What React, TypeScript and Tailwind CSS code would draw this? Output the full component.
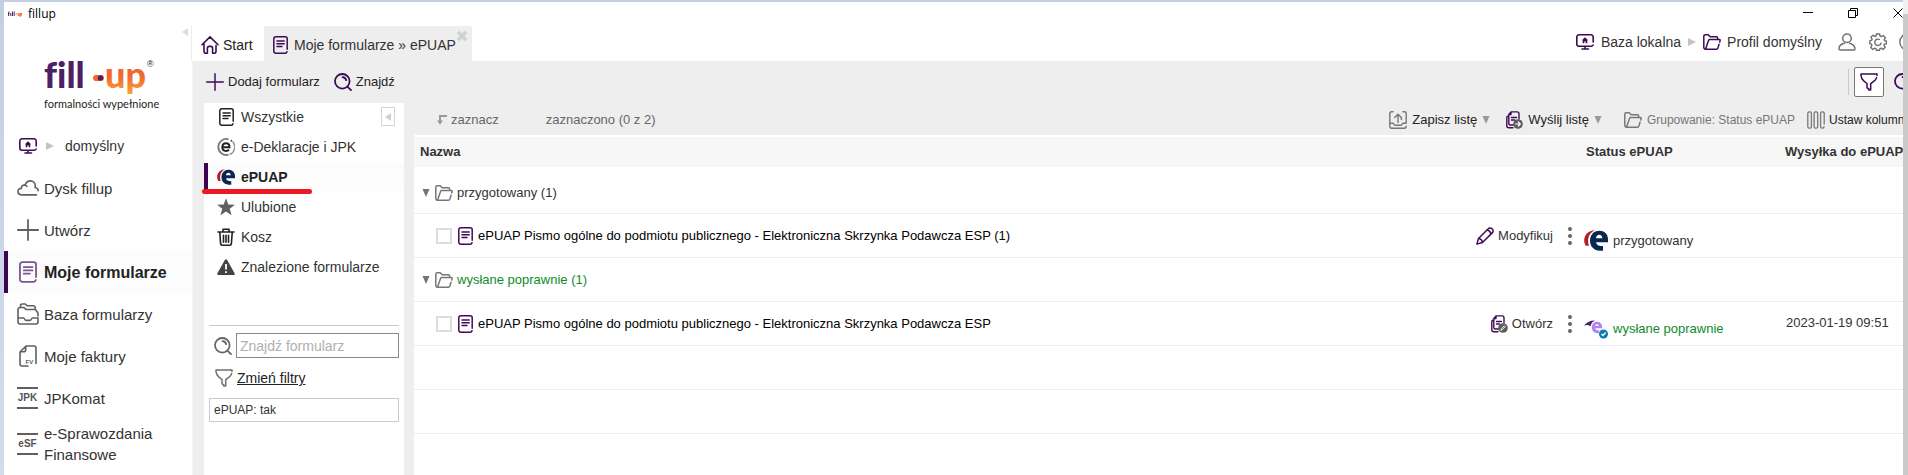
import React from "react";

type IconProps = { className?: string };

const stroke = {
  fill: "none",
  stroke: "currentColor",
  strokeLinecap: "round" as const,
  strokeLinejoin: "round" as const,
};

function Svg({
  box = "0 0 18 18",
  className = "",
  width = 1.4,
  children,
}: {
  box?: string;
  className?: string;
  width?: number;
  children: React.ReactNode;
}) {
  return (
    <svg viewBox={box} className={`shrink-0 ${className}`} {...stroke} strokeWidth={width} aria-hidden="true">
      {children}
    </svg>
  );
}

function DocIcon({ className = "h-[18px] w-[15px]" }: IconProps) {
  return (
    <Svg box="0 0 15 18" className={className} width={1.5}>
      <path d="M14.2 13.2V2.8a2 2 0 0 0-2-2H2.8a2 2 0 0 0-2 2v12.4a2 2 0 0 0 2 2H12a2 2 0 0 0 2-1.5M4 5h7.2M4 7.7h7.2M4 10.4h5" />
    </Svg>
  );
}

function MonitorIcon({ className = "" }: IconProps) {
  return (
    <Svg box="0 0 18 16" className={`h-4 w-[18px] ${className}`} width={1.6}>
      <path d="M17.2 8V3a2.2 2.2 0 0 0-2.2-2.2H3A2.2 2.2 0 0 0 .8 3v7A2.2 2.2 0 0 0 3 12.2h12A2.2 2.2 0 0 0 17.1 11M9 12.5v2.3M6 15h6.5" />
      <path d="M9 3.2 5.9 6.3h.8v3h1.6V7.5h1.4v1.8h1.6v-3h.8z" fill="currentColor" stroke="none" />
    </Svg>
  );
}

function FolderIcon({ className = "" }: IconProps) {
  return (
    <Svg box="0 0 18 16" className={`h-4 w-[18px] ${className}`} width={1.5}>
      <path d="M2 15.2C1.200 15 .8 14.500 .8 13.600V2.200Q.8.8 2.200.8h3l2 2h6q1.500 0 1.500 1.600v.8M2.500 15.200 5.600 6.300q.3-.9 1.200-.9h9.400q1.200 0 .9 1.200l-.4 1.400M16 10.300l-1.100 3.700q-.4 1.200-1.500 1.200H2.300" />
    </Svg>
  );
}

function CloudIcon() {
  return (
    <Svg box="0 0 22 16" className="h-4 w-[22px]" width={1.6}>
      <path d="M19.500 14.900H4.200A3.300 3.300 0 0 1 1 11.600c0-2 1.500-3.300 3.400-3.200C4.300 6 6 4.700 8 5.200 9 2.300 11 .9 13.300.9c3 0 5 2.200 5 5.100 0 .6 0 .9-.2 1.500 1.600.2 2.900 1.300 3.100 3.100M8 5.200c.8.200 1.400.6 1.800 1.100" />
    </Svg>
  );
}

function PlusIcon({ className = "" }: IconProps) {
  return (
    <Svg box="0 0 20 20" className={className} width={1.6}>
      <path d="M10 .8v18.400M.8 10h18.400" />
    </Svg>
  );
}

function InboxIcon() {
  return (
    <Svg box="0 0 22 22" className="size-[22px]" width={1.6}>
      <path d="M1 15V6.500a2 2 0 0 1 2-2h4l2 2h8.500q2 0 2 2M3.500 4.300V2.600q0-1.600 1.600-1.600h3.200l2 1.800h6q1.800 0 1.800 1.800v1.600M19.600 8.600q1.400.5 1.400 2V13M1 15h5.500q.8 0 1 .9.400 1.500 1.600 1.500h3.800q1.200 0 1.600-1.500.2-.9 1-.9H21v4a2 2 0 0 1-2 2H3a2 2 0 0 1-2-2z" />
    </Svg>
  );
}

function InvoiceIcon() {
  return (
    <svg viewBox="0 0 18 22" className="h-[22px] w-[18px] shrink-0" {...stroke} strokeWidth={1.6} aria-hidden="true">
      <path d="M9 21H3a2 2 0 0 1-2-2V7l6-6h8a2 2 0 0 1 2 2v15.500M1.200 6.800h3.500a2 2 0 0 0 2-2V1.500" />
      <text x="6.500" y="18.500" fontSize="6" fontWeight="700" fill="currentColor" stroke="none" fontFamily="Liberation Sans, sans-serif">
        FV
      </text>
    </svg>
  );
}

function LabelIcon({ text }: { text: string }) {
  return (
    <span className="flex h-[22px] w-[21px] items-center justify-center border-y-2 border-[#606060] text-[10px] leading-none font-bold text-[#555]">
      {text}
    </span>
  );
}

function HomeIcon() {
  return (
    <Svg className="size-[18px]" width={1.6}>
      <path d="M1 8.700 9 .9l8 7.800M3 7.500v7.700q0 2 2 2h1.400v-5q0-1.800 1.800-1.800h1.600q1.800 0 1.800 1.800v5H13q2 0 2-2V9.500" />
    </Svg>
  );
}

function SearchIcon({ className = "size-[18px]" }: IconProps) {
  return (
    <Svg className={className} width={1.800}>
      <circle cx="8.300" cy="8.300" r="7.300" />
      <path d="m13.600 13.800 3.400 3.300M8.500 4.200q3 .2 3.700 3" />
    </Svg>
  );
}

function FunnelIcon({ className = "" }: IconProps) {
  return (
    <Svg className={`size-[18px] ${className}`} width={1.500}>
      <path d="M17 2.500V1H1v1.500Q1.200 6 4 8.200l3 2.300v4.300q1 1 1.700.7v1.600h2v-6.500l3.300-2.400Q16 6.700 16.600 4.600" />
    </Svg>
  );
}

function UserIcon() {
  return (
    <Svg className="size-[18px]" width={1.500}>
      <circle cx="9" cy="5.200" r="4.300" />
      <path d="M17 15Q15.500 11 11.500 10.200M6.500 10.200Q1 11.300.9 15.800q0 1.300 1.300 1.300h13q1.600 0 1.800-1" />
    </Svg>
  );
}

function GearIcon() {
  return (
    <Svg className="size-[18px]" width={1.400}>
      <path d="M7.400 1h3.200l.5 2.200 1.100.5 2-1.200 2.200 2.200-1.200 2 .5 1.100L17.500 8v2.800l-2 .3-.5 1.200 1.200 2-2.100 2.200-2-1.300-1.200.5-.4 1.600H7.400L7 15.700l-1.200-.5-2 1.300-2.100-2.200 1.200-2-.5-1.200L.8 10.700V7.800l1.800-.5.500-1.100-1.300-2L4 2.200l1.900 1.300L7 3z" />
      <path d="M12 10.200A3.200 3.200 0 1 1 10.500 6.500" />
    </Svg>
  );
}

function EpuapIcon({ className = "h-[21px] w-6" }: IconProps) {
  return (
    <svg viewBox="0 0 24 21" className={`shrink-0 ${className}`} aria-hidden="true">
      <path fill="#b31b25" d="M11 .2C4 .2.100 5.500.200 10.500c0 2.300.8 4 1.600 5.300H5c-.9-2.300-1-4.800-.8-6.800C4.700 5 7 1.800 11 .2z" />
      <path
        fill="#08284f"
        fillRule="evenodd"
        d="M15.200.7C20.300.7 24 4.200 24 9v3.200H12c.4 2.700 2.700 3.900 7 3.900v4.600h-3C10 20.700 6 16.500 6 10.800 6 4.800 10 .7 15.200.7zM12 8.200h6.300c0-2.200-1.200-3.500-3.100-3.500-1.800 0-3 1.300-3.200 3.500z"
      />
    </svg>
  );
}

function SentIcon() {
  return (
    <svg viewBox="0 -2 24 21" className="h-[21px] w-6 shrink-0" aria-hidden="true">
      <path fill="#4a2168" d="M0 5.500Q5 .2 11 .6 7.500 2 6.500 6.200 3.500 4.200 0 5.500z" />
      <path
        fill="#b184f7"
        fillRule="evenodd"
        d="M12.800 1.800c3 0 5.400 2 5.400 5v1.400h-7c.2 1.700 1.600 2.200 4 2.200v2.800h-1.700c-3.300 0-5.700-2.300-5.700-5.700 0-3.300 2.200-5.700 5-5.700zM11.200 5.900h3.500c0-1.100-.7-1.700-1.700-1.700s-1.700.6-1.800 1.700z"
      />
      <circle cx="19.500" cy="14" r="4.500" fill="#0c78b8" />
      <path d="m17.500 14 1.500 1.500 2.600-3" fill="none" stroke="#fff" strokeWidth="1.300" />
    </svg>
  );
}

function DeclarationIcon() {
  return (
    <svg viewBox="0 0 18 18" className="size-[18px]" fill="none" aria-hidden="true">
      <path d="M11.500 1.300A8 8 0 1 0 11.500 16.700" stroke="#777" strokeWidth="1.800" />
      <path d="M12.500 16.500A8 8 0 0 0 15.500 3.500" stroke="#999" strokeWidth="1.600" />
      <path d="M5.500 9.200h7Q12.500 5.200 9 5.200T5.300 9.200q0 3.600 3.700 3.700 2 0 3-1.200" stroke="#222" strokeWidth="2" />
      <circle cx="14.300" cy="2.800" r="1" fill="#555" />
    </svg>
  );
}

function StarIcon() {
  return (
    <svg viewBox="0 0 18 18" className="size-[18px]" fill="#5f5f5f" aria-hidden="true">
      <path d="m9 .3 2.300 6.200 6.600.2-5.200 4 1.900 6.500L9 13.500l-5.600 3.700 1.900-6.500-5.200-4 6.600-.2z" />
    </svg>
  );
}

function TrashIcon() {
  return (
    <Svg className="size-[18px] text-[#222]" width={1.600}>
      <path d="M1 4h16M6 3.800V1.200h6v2.600M2.800 4.500l.8 11.200q.2 1.500 1.600 1.500h7.600q1.400 0 1.600-1.500l.8-11M6.500 7.200v7M9 7.200v7M11.500 7.200v7" />
    </Svg>
  );
}

function WarningIcon() {
  return (
    <svg viewBox="0 0 18 18" className="size-[18px]" aria-hidden="true">
      <path d="M9 1.200q.8 0 1.300 1l7.300 13q.7 1.800-1 1.800H1.400q-1.700 0-1-1.800l7.300-13q.500-1 1.300-1z" fill="#444" />
      <path d="M9 6v5.500M9 13.300v1.700" stroke="#fff" strokeWidth="1.800" />
    </svg>
  );
}

function PencilIcon() {
  return (
    <Svg className="size-[18px] text-[#3d0b55]" width={1.500}>
      <path d="M.9 17.100 2.500 11.500 12 2q1.500-1.600 3.200-.8 2.800 1.700 1.500 4.200L6.500 15.500zM2.500 11.500q3.300.3 4 4M11 3q3.300.6 3.900 4" />
    </Svg>
  );
}

function PagesIcon({ badge }: { badge: "arrow" | "pencil" }) {
  return (
    <Svg box="0 0 17 18" className="h-[18px] w-[17px] text-[#3d0b55]" width={1.400}>
      <path d="M5 .9h6q2 0 2 2V8M5 .9 2.800 3.500M2.800 3.500H5V1M2.800 4v8.500q0 1.500 1.500 1.500H8M2.500 5Q.8 5 .8 6.800v8q0 2 2 2H7M5.500 6.500h5M5.500 9h3" />
      <circle cx="12" cy="13" r="4.800" fill="#5c5c5c" stroke="none" />
      {badge === "arrow" ? (
        <path d="M9.500 13h4.600M12.300 11l2 2-2 2" stroke="#fff" strokeWidth="1.200" />
      ) : (
        <path d="m10 15 .4-1.300 3-3 .9.900-3 3z" stroke="#fff" strokeWidth=".9" />
      )}
    </Svg>
  );
}

function SaveIcon() {
  return (
    <Svg className="size-[18px] text-[#777]" width={1.400}>
      <path d="M4 .8H2.500Q.8.8.8 2.500v12.800q0 1.900 1.900 1.900h12.600q1.900 0 1.900-1.900M14 .8h1.500q1.700 0 1.700 1.700v9.800h-3.500q-.7 2-1.700 2H6q-1 0-1.700-2H1M9 11.500V4M5.600 6.500 9 3.200l3.400 3.300v2" />
    </Svg>
  );
}

function ColumnsIcon() {
  return (
    <Svg className="size-[18px] text-[#777]" width={1.300}>
      <rect x=".8" y=".8" width="3.600" height="16.400" rx="1.500" />
      <rect x="7.100" y=".8" width="3.600" height="16.400" rx="1.500" />
      <path d="M17.200 13V2.300q0-1.500-1.500-1.500h-.6q-1.500 0-1.500 1.500v13.400q0 1.500 1.500 1.500 1.600 0 1.900-1.200" />
    </Svg>
  );
}

function Triangle({ dir, className = "" }: { dir: "left" | "right" | "down"; className?: string }) {
  const points = dir === "left" ? "7,0 7,8 1,4" : dir === "right" ? "0,0 8,4 0,8" : "0.5,0 7.5,0 4,8";
  return (
    <svg viewBox="0 0 8 8" className={`size-2 shrink-0 fill-current ${className}`} aria-hidden="true">
      <polygon points={points} />
    </svg>
  );
}

function BrandMark() {
  return (
    <svg viewBox="0 -10 120 64" className="h-16 w-[120px]" role="img" aria-label="fill-up">
      <defs>
        <linearGradient id="warm" x1="0" y1="0" x2="0" y2="1">
          <stop offset="0.55" stopColor="#f1672f" />
          <stop offset="1" stopColor="#ffab35" />
        </linearGradient>
      </defs>
      <g fontFamily="Lato, sans-serif" fontWeight="900" fontSize="36" className="[font-variant-ligatures:none]">
        <text x="0" y="29" fill="#4d2065">
          fill
        </text>
        <text x="61" y="29" fill="url(#warm)">
          up
        </text>
      </g>
      <rect x="49" y="16" width="11" height="6" rx="3" fill="#f1672f" />
      <circle cx="56.500" cy="19" r="2.700" fill="#4d2065" />
      <text x="103" y="8" fontSize="9" fill="#222" fontFamily="Liberation Sans, sans-serif">
        ®
      </text>
      <text x="0" y="49" fontSize="11" fill="#1d1d1d" fontFamily="Lato, sans-serif">
        formalności wypełnione
      </text>
    </svg>
  );
}

const navItems = [
  { label: "Dysk fillup", icon: <CloudIcon /> },
  { label: "Utwórz", icon: <PlusIcon className="size-[22px]" /> },
  { label: "Moje formularze", icon: <DocIcon className="h-[22px] w-[18px] text-[#7b5592]" />, active: true },
  { label: "Baza formularzy", icon: <InboxIcon /> },
  { label: "Moje faktury", icon: <InvoiceIcon /> },
  { label: "JPKomat", icon: <LabelIcon text="JPK" /> },
  { label: "e-Sprawozdania Finansowe", icon: <LabelIcon text="eSF" /> },
];

const folders = [
  { label: "Wszystkie", icon: <DocIcon className="h-[18px] w-[15px] text-[#222]" /> },
  { label: "e-Deklaracje i JPK", icon: <DeclarationIcon /> },
  { label: "ePUAP", icon: <EpuapIcon className="h-4 w-[18px]" />, active: true },
  { label: "Ulubione", icon: <StarIcon /> },
  { label: "Kosz", icon: <TrashIcon /> },
  { label: "Znalezione formularze", icon: <WarningIcon /> },
];

function Sidebar() {
  return (
    <aside className="w-[188px] shrink-0">
      <div className="flex h-9 justify-end border-r border-[#eee] pt-[3px] pr-0.5">
        <button aria-label="Zwiń menu" className="h-2 text-[#ddd]">
          <Triangle dir="left" />
        </button>
      </div>
      <div className="-mt-3 h-16 pl-10">
        <BrandMark />
      </div>
      <button className="mt-3 flex h-[42px] items-center pl-[15px] text-sm text-[#333]">
        <MonitorIcon className="text-[#3d0b55]" />
        <Triangle dir="right" className="mr-[11px] ml-[9px] text-[#c4c4c4]" />
        domyślny
      </button>
      <nav>
        {navItems.map((item) => (
          <a
            key={item.label}
            href="#"
            className={`flex min-h-[42px] items-center gap-1.5 border-l-4 pt-1 leading-[21px] last:mt-1 last:pt-0 ${
              item.active
                ? "border-[#3b0552] bg-[#fcfcfc] pb-1 text-[16px] font-bold text-[#222]"
                : "border-transparent pb-1 text-[15px] text-[#333]"
            }`}
          >
            <span className="ml-2 flex w-[23px] shrink-0 justify-center text-[#606060]">{item.icon}</span>
            <span className="-ml-px">{item.label}</span>
          </a>
        ))}
      </nav>
    </aside>
  );
}

function TopBar() {
  return (
    <div className="flex h-9 items-stretch justify-between pt-px text-sm text-[#333]">
      <div className="flex">
        <button className="flex w-[72px] items-center gap-1 pt-0.5 pl-[9px] text-[#222]">
          <span className="text-[#3d0b55]">
            <HomeIcon />
          </span>
          Start
        </button>
        <div className="relative flex w-[208px] items-center bg-[#eee] pt-0.5">
          <button className="flex items-center gap-1.5 pl-[9px] whitespace-nowrap">
            <DocIcon className="h-[18px] w-[15px] text-[#3d0b55]" />
            Moje formularze » ePUAP
          </button>
          <button aria-label="Zamknij kartę" className="absolute top-1 right-1 text-[#d2d2d2]">
            <Svg box="0 0 12 12" className="size-3" width={3.600}>
              <path d="m3 3 6 6M9 3 3 9" />
            </Svg>
          </button>
        </div>
      </div>
      <div className="flex items-center pb-1 text-[#707070]">
        <button className="flex items-center gap-[7px] text-[#333]">
          <MonitorIcon className="text-[#3d0b55]" />
          Baza lokalna
        </button>
        <Triangle dir="right" className="mx-[7px] text-[#c4c4c4]" />
        <button className="mr-4 flex items-center gap-1.5 text-[#333]">
          <FolderIcon className="text-[#3d0b55]" />
          Profil domyślny
        </button>
        <button aria-label="Konto" className="mr-[13px]">
          <UserIcon />
        </button>
        <button aria-label="Ustawienia" className="mr-3">
          <GearIcon />
        </button>
        <button aria-label="Pomoc" className="flex w-1 overflow-hidden">
          <Svg className="size-[18px]">
            <circle cx="9" cy="9" r="8.200" />
          </Svg>
        </button>
      </div>
    </div>
  );
}

function Toolbar() {
  return (
    <div className="flex h-[42px] items-center justify-between pl-[13px] text-[13px] text-[#222]">
      <div className="flex items-center gap-3.5">
        <button className="flex items-center gap-1">
          <PlusIcon className="size-[18px] text-[#3d0b55]" />
          Dodaj formularz
        </button>
        <button className="flex items-center gap-1">
          <SearchIcon className="size-[18px] text-[#3d0b55]" />
          Znajdź
        </button>
      </div>
      <div className="flex items-center">
        <span className="mr-[5px] h-[26px] w-px bg-[#c3cccc]" />
        <button aria-label="Filtruj" className="flex size-[30px] items-center justify-center rounded-xs border border-[#777] bg-white text-[#3d0b55]">
          <FunnelIcon />
        </button>
        <button aria-label="Szukaj" className="ml-2.5 flex w-[9px] overflow-hidden text-[#3d0b55]">
          <SearchIcon />
        </button>
      </div>
    </div>
  );
}

function FolderPanel() {
  return (
    <section className="w-[200px] shrink-0 bg-white">
      <div className="relative">
        <button aria-label="Zwiń panel" className="absolute top-1 right-[9px] flex h-[19px] w-3.5 items-center justify-center border border-[#d5d5d5] text-[#d0d0d0]">
          <Triangle dir="left" />
        </button>
        <ul className="text-sm text-[#333]">
          {folders.map((f) => (
            <li key={f.label} className="relative h-[30px] pb-0.5">
              <a
                href="#"
                className={`flex h-7 items-center border-l-4 pl-[9px] ${
                  f.active ? "border-[#3b0552] bg-[#fcfcfc] font-bold text-[#222]" : "border-transparent"
                }`}
              >
                <span className="mr-1.5 flex w-[18px] justify-center">{f.icon}</span>
                {f.label}
              </a>
              {f.active && <span className="absolute -bottom-px -left-0.5 h-[5px] w-[110px] rounded-full bg-[#ec1822]" />}
            </li>
          ))}
        </ul>
      </div>
      <div className="mx-[5px] mt-[42px] border-t border-[#c3cccc] pt-[7px]">
        <label className="flex items-center gap-1 pl-[5px] text-[#666]">
          <SearchIcon />
          <input
            aria-label="Znajdź formularz"
            placeholder="Znajdź formularz"
            className="h-[25px] min-w-0 flex-1 border border-[#888] px-[3px] text-sm text-[#333] outline-none placeholder:text-[#b0b0b0]"
          />
        </label>
        <a href="#" className="mt-2.5 flex items-center gap-1 pl-[6px] text-sm text-[#222] underline">
          <FunnelIcon className="text-[#707070]" />
          Zmień filtry
        </a>
        <div className="mt-2.5 flex h-6 items-center border border-[#ccc] px-1 text-xs text-[#333]">ePUAP: tak</div>
      </div>
    </section>
  );
}

function ListToolbar() {
  return (
    <div className="flex h-8 items-center justify-between pt-0.5 text-[13px] text-[#666]">
      <div className="flex items-center gap-[47px] pl-[23px]">
        <button className="flex items-center gap-1">
          <svg viewBox="0 0 10 10" className="size-2.5" fill="none" stroke="#999" strokeWidth="2" aria-hidden="true">
            <path d="M10 1H3v5" />
            <path d="M0 5.500h6L3 9.800z" fill="#999" stroke="none" />
          </svg>
          zaznacz
        </button>
        <span>zaznaczono (0 z 2)</span>
      </div>
      <div className="flex items-center whitespace-nowrap text-[#222]">
        <button className="flex items-center gap-[5px]">
          <SaveIcon />
          Zapisz listę
          <Triangle dir="down" className="text-[#999]" />
        </button>
        <button className="ml-4 flex items-center gap-[5px]">
          <PagesIcon badge="arrow" />
          Wyślij listę
          <Triangle dir="down" className="text-[#999]" />
        </button>
        <button className="ml-[22px] flex items-center gap-[5px] text-xs text-[#777]">
          <FolderIcon />
          Grupowanie: Status ePUAP
        </button>
        <button className="ml-3 flex w-24 items-center gap-1 overflow-hidden text-xs">
          <ColumnsIcon />
          Ustaw kolumny
        </button>
      </div>
    </div>
  );
}

function GroupRow({ label, tone, cell }: { label: string; tone: string; cell: string }) {
  return (
    <tr className="border-b border-[#eee]">
      <td colSpan={4} className={cell}>
        <button className={`flex items-center pl-2 ${tone}`}>
          <Triangle dir="down" className="mr-[5px] text-[#6d7773]" />
          <FolderIcon className="mr-1 text-[#777]" />
          {label}
        </button>
      </td>
    </tr>
  );
}

function FormRow({
  title,
  action,
  icon,
  status,
  date,
}: {
  title: string;
  action: string;
  icon: React.ReactNode;
  status: React.ReactNode;
  date?: string;
}) {
  return (
    <tr className="h-11 border-b border-[#eee]">
      <td className="pt-0.5">
        <label className="flex items-center pl-[22px] text-black">
          <input type="checkbox" className="mr-1.5 size-4 appearance-none border-2 border-[#ddd] bg-white" />
          <DocIcon className="mr-[5px] h-[18px] w-[15px] text-[#3d0b55]" />
          {title}
        </label>
      </td>
      <td className="pt-0.5">
        <div className="flex items-center justify-end">
          <button className="flex items-center gap-1">
            {icon}
            {action}
          </button>
          <button aria-label="Więcej" className="mr-3 ml-[15px]">
            <svg viewBox="0 0 4 18" className="h-[18px] w-1 fill-[#666]" aria-hidden="true">
              <circle cx="2" cy="2" r="2" />
              <circle cx="2" cy="9" r="2" />
              <circle cx="2" cy="16" r="2" />
            </svg>
          </button>
        </div>
      </td>
      <td className="pt-0.5">{status}</td>
      <td className="pl-px">{date}</td>
    </tr>
  );
}

function FormsTable() {
  return (
    <table className="w-full table-fixed border-collapse border-t-2 border-white bg-white text-left text-[13px] text-[#333]">
      <colgroup>
        <col />
        <col className="w-40" />
        <col className="w-[201px]" />
        <col className="w-[118px]" />
      </colgroup>
      <thead>
        <tr className="h-[31px] bg-[#f7f7f7]">
          <th scope="col" className="pb-px pl-1.5 font-bold">
            Nazwa
          </th>
          <th aria-label="Akcje" />
          <th scope="col" className="pb-px pl-0.5 font-bold">
            Status ePUAP
          </th>
          <th scope="col" className="overflow-hidden pb-px font-bold whitespace-nowrap">
            Wysyłka do ePUAP
          </th>
        </tr>
      </thead>
      <tbody>
        <GroupRow label="przygotowany (1)" tone="text-[#333]" cell="h-[46px] pt-1.5" />
        <FormRow
          title="ePUAP Pismo ogólne do podmiotu publicznego - Elektroniczna Skrzynka Podawcza ESP (1)"
          action="Modyfikuj"
          icon={<PencilIcon />}
          status={
            <span className="flex items-end gap-[5px] pt-2">
              <EpuapIcon />
              przygotowany
            </span>
          }
        />
        <GroupRow label="wysłane poprawnie (1)" tone="text-[#118a2c]" cell="h-11 pt-0.5" />
        <FormRow
          title="ePUAP Pismo ogólne do podmiotu publicznego - Elektroniczna Skrzynka Podawcza ESP"
          action="Otwórz"
          icon={<PagesIcon badge="pencil" />}
          status={
            <span className="flex items-end gap-[5px] pt-2 text-[#118a2c]">
              <SentIcon />
              wysłane poprawnie
            </span>
          }
          date="2023-01-19 09:51"
        />
        <tr className="h-11 border-b border-[#eee]">
          <td colSpan={4} />
        </tr>
        <tr className="h-11 border-b border-[#eee]">
          <td colSpan={4} />
        </tr>
      </tbody>
    </table>
  );
}

function TitleBar() {
  return (
    <header className="flex h-[23px] items-center justify-between pl-1 font-['Open_Sans','Noto_Sans',sans-serif] text-xs text-black">
      <div className="flex items-center gap-1.5">
        <svg viewBox="0 0 14 6" className="h-1.5 w-3.5" aria-hidden="true">
          <path d="M.6 5V1.500q0-.8 1-.8M0 2.500h1.500M2.800 2v3M4.500.5V5M6.200.5V5" stroke="#4d2065" fill="none" />
          <path d="M7.500 3h1.400M10 2v2.500h1.300V2M12.300 6V2.300h1.200v2h-1" stroke="#f1672f" fill="none" />
        </svg>
        fillup
      </div>
      <div className="flex items-center pb-0.5">
        <button aria-label="Minimalizuj" className="mr-[35px] h-px w-2.5 bg-black" />
        <button aria-label="Przywróć" className="mr-[35px]">
          <svg viewBox="0 0 10 10" className="size-2.5" fill="none" stroke="#000" aria-hidden="true">
            <path d="M.5 2.500h7v7h-7zM2.500 2.500v-2h7v7h-2" />
          </svg>
        </button>
        <button aria-label="Zamknij" className="flex w-2.5 overflow-hidden">
          <svg viewBox="0 0 10 10" className="size-2.5 shrink-0" stroke="#000" aria-hidden="true">
            <path d="m.5.5 9 9M9.500.5l-9 9" />
          </svg>
        </button>
      </div>
    </header>
  );
}

export default function App() {
  return (
    <div className="flex min-h-screen bg-white font-['Liberation_Sans',Arial,sans-serif]">
      <div className="w-1 shrink-0 bg-linear-to-b from-[#c5cfe2] to-[#d3dcea]" />
      <div className="flex min-w-0 flex-1 flex-col overflow-hidden border-t-2 border-[#c5cfe2]">
        <TitleBar />
        <div className="flex flex-1">
          <Sidebar />
          <main className="flex min-w-0 flex-1 flex-col">
            <TopBar />
            <div className="flex flex-1 flex-col border-l border-[#f5f5f5] bg-[#eee]">
              <Toolbar />
              <div className="flex flex-1 gap-2.5 pl-[11px]">
                <FolderPanel />
                <section className="flex min-w-0 flex-1 flex-col">
                  <ListToolbar />
                  <div className="flex-1 bg-white">
                    <FormsTable />
                  </div>
                </section>
              </div>
            </div>
          </main>
        </div>
      </div>
      <div className="w-[5px] shrink-0 border-t-[14px] border-[#f0f0f0] bg-[#cacaca]" />
    </div>
  );
}
